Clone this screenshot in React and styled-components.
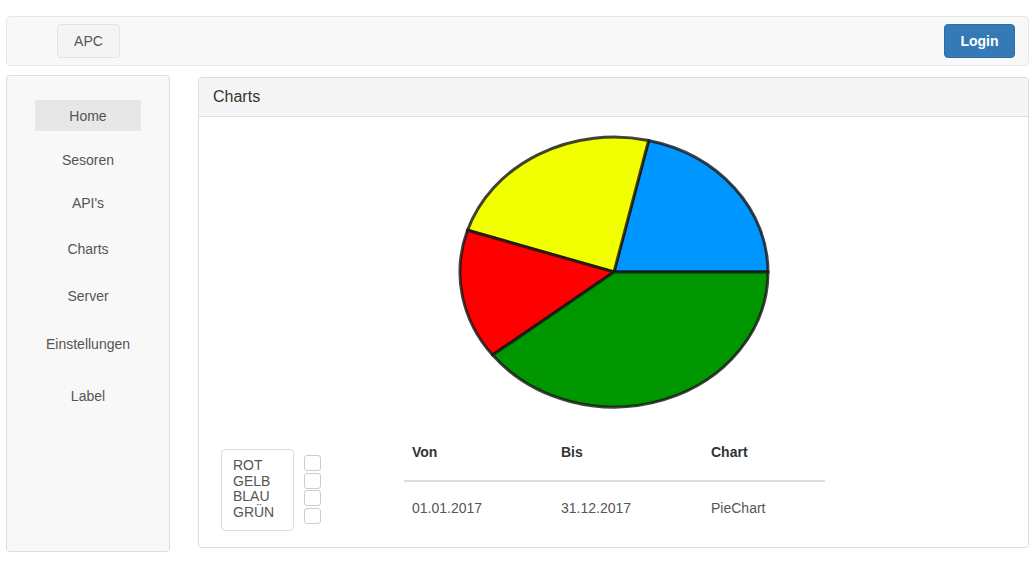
import React from "react";
import styled, { createGlobalStyle } from "styled-components";

const Global = createGlobalStyle`
  html, body { margin: 0; padding: 0; background: #fff; }
  body { font-family: "Liberation Sans", Arial, sans-serif; font-size: 14px; color: #333; }
  * { box-sizing: border-box; }
`;

const Page = styled.div`
  width: 1036px;
  height: 563px;
  padding: 16px 7px 0 6px;
`;

const Navbar = styled.div`
  height: 50px;
  display: flex;
  align-items: center;
  justify-content: space-between;
  padding: 0 13px 0 50px;
  background: #f8f8f8;
  border: 1px solid #e7e7e7;
  border-radius: 4px;
`;

const BrandButton = styled.button`
  height: 34px;
  width: 63px;
  font: 14px "Liberation Sans", Arial, sans-serif;
  color: #555;
  background: #f4f4f4;
  border: 1px solid #e3e3e3;
  border-radius: 4px;
`;

const LoginButton = styled.button`
  height: 34px;
  width: 71px;
  font: bold 14px "Liberation Sans", Arial, sans-serif;
  color: #fff;
  background: #337ab7;
  border: 1px solid #2e6da4;
  border-radius: 4px;
`;

const Main = styled.div`
  display: flex;
  align-items: flex-start;
  margin-top: 9px;
`;

const Sidebar = styled.nav`
  width: 164px;
  height: 477px;
  padding-top: 24px;
  background: #f8f8f8;
  border: 1px solid #ddd;
  border-radius: 4px;
  display: flex;
  flex-direction: column;
  align-items: center;
`;

const NavItem = styled.div`
  width: 106px;
  height: 31px;
  margin-top: ${(p) => p.$gap}px;
  display: flex;
  align-items: center;
  justify-content: center;
  color: #555;
  font-size: 14px;
  background: ${(p) => (p.$active ? "#e7e7e7" : "transparent")};
`;

const Panel = styled.section`
  flex: 1;
  margin-left: 28px;
  margin-top: 2px;
  height: 471px;
  border: 1px solid #ddd;
  border-radius: 4px;
  background: #fff;
  display: flex;
  flex-direction: column;
`;

const PanelHeader = styled.div`
  height: 39px;
  padding: 0 14px;
  display: flex;
  align-items: center;
  font-size: 16px;
  color: #333;
  background: #f5f5f5;
  border-bottom: 1px solid #ddd;
  border-radius: 3px 3px 0 0;
`;

const PanelBody = styled.div`
  padding-top: 13px;
  display: flex;
  flex-direction: column;
`;

const PieWrap = styled.div`
  display: flex;
  justify-content: center;
`;

const Bottom = styled.div`
  display: flex;
  align-items: flex-start;
  margin-top: 11px;
  padding-left: 22px;
`;

const Legend = styled.div`
  width: 73px;
  height: 82px;
  margin-top: 24px;
  padding: 8px 0 0 11px;
  border: 1px solid #ddd;
  border-radius: 4px;
  font-size: 14px;
  line-height: 15.6px;
  color: #555;
`;

const Checks = styled.div`
  margin-top: 30px;
  margin-left: 10px;
  display: flex;
  flex-direction: column;
  gap: 1.6px;
`;

const Check = styled.div`
  width: 17px;
  height: 16px;
  border: 1px solid #ccc;
  border-radius: 3px;
  background: #fff;
`;

const Table = styled.table`
  margin-left: 83px;
  width: 421px;
  border-collapse: collapse;
  font-size: 14px;
  line-height: 20px;
`;

const Th = styled.th`
  width: ${(p) => p.$w}px;
  text-align: left;
  font-weight: bold;
  color: #333;
  padding: 17px 8px 18px;
  border-bottom: 2px solid #ddd;
`;

const Td = styled.td`
  color: #555;
  padding: 16px 8px;
`;

const slices = [
  { color: "#0096ff", d: "M160 142 L314 142 A154 135 0 0 0 194.6 10.5 Z" },
  { color: "#f2ff00", d: "M160 142 L194.6 10.5 A154 135 0 0 0 13.5 100.3 Z" },
  { color: "#ff0000", d: "M160 142 L13.5 100.3 A154 135 0 0 0 38.6 225.1 Z" },
  { color: "#009600", d: "M160 142 L38.6 225.1 A154 135 0 0 0 314 142 Z" },
];

const navItems = [
  { label: "Home", gap: 0, active: true },
  { label: "Sesoren", gap: 13.5 },
  { label: "API's", gap: 12 },
  { label: "Charts", gap: 15 },
  { label: "Server", gap: 16 },
  { label: "Einstellungen", gap: 17 },
  { label: "Label", gap: 21 },
];

export default function App() {
  return (
    <>
      <Global />
      <Page>
        <Navbar>
          <BrandButton>APC</BrandButton>
          <LoginButton>Login</LoginButton>
        </Navbar>
        <Main>
          <Sidebar>
            {navItems.map((n) => (
              <NavItem key={n.label} $gap={n.gap} $active={n.active}>
                {n.label}
              </NavItem>
            ))}
          </Sidebar>
          <Panel>
            <PanelHeader>Charts</PanelHeader>
            <PanelBody>
              <PieWrap>
                <svg width="320" height="284" viewBox="0 0 320 284">
                  {slices.map((s) => (
                    <path
                      key={s.color}
                      d={s.d}
                      fill={s.color}
                      stroke="rgba(20,20,20,0.8)"
                      strokeWidth="3"
                      strokeLinejoin="round"
                    />
                  ))}
                </svg>
              </PieWrap>
              <Bottom>
                <Legend>
                  <div>ROT</div>
                  <div>GELB</div>
                  <div>BLAU</div>
                  <div>GRÜN</div>
                </Legend>
                <Checks>
                  <Check />
                  <Check />
                  <Check />
                  <Check />
                </Checks>
                <Table>
                  <thead>
                    <tr>
                      <Th $w={149}>Von</Th>
                      <Th $w={150}>Bis</Th>
                      <Th $w={122}>Chart</Th>
                    </tr>
                  </thead>
                  <tbody>
                    <tr>
                      <Td>01.01.2017</Td>
                      <Td>31.12.2017</Td>
                      <Td>PieChart</Td>
                    </tr>
                  </tbody>
                </Table>
              </Bottom>
            </PanelBody>
          </Panel>
        </Main>
      </Page>
    </>
  );
}
